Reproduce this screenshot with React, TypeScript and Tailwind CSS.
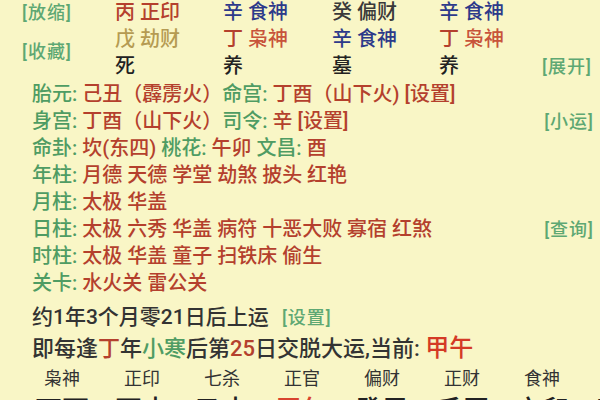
type Tone = "g" | "r";

const tone: Record<Tone, string> = {
  g: "text-[#4f9c63]",
  r: "text-[#b4402d]",
};

type Seg = [string, Tone];

const pillarRows: { parts: Seg[]; action?: string }[] = [
  {
    parts: [
      ["胎元: ", "g"],
      ["己丑（霹雳火）", "r"],
      ["命宫: ", "g"],
      ["丁酉（山下火) [设置]", "r"],
    ],
  },
  {
    parts: [
      ["身宫: ", "g"],
      ["丁酉（山下火）", "r"],
      ["司令: ", "g"],
      ["辛 [设置]", "r"],
    ],
    action: "[小运]",
  },
  {
    parts: [
      ["命卦: ", "g"],
      ["坎(东四) ", "r"],
      ["桃花: ", "g"],
      ["午卯 ", "r"],
      ["文昌: ", "g"],
      ["酉", "r"],
    ],
  },
  { parts: [["年柱: ", "g"], ["月德 天德 学堂 劫煞 披头 红艳", "r"]] },
  { parts: [["月柱: ", "g"], ["太极 华盖", "r"]] },
  {
    parts: [["日柱: ", "g"], ["太极 六秀 华盖 病符 十恶大败 寡宿 红煞", "r"]],
    action: "[查询]",
  },
  { parts: [["时柱: ", "g"], ["太极 华盖 童子 扫铁床 偷生", "r"]] },
  { parts: [["关卡: ", "g"], ["水火关 雷公关", "r"]] },
];

const tenGods = ["枭神", "正印", "七杀", "正官", "偏财", "正财", "食神", "伤官"];
const dayun = ["丁酉", "丙申", "乙未", "甲午", "癸巳", "壬辰", "辛卯", "庚寅"];

export default function App() {
  return (
    <div className="h-[400px] w-[600px] overflow-hidden bg-[#f9f6c6] font-['Roboto','Noto_Sans_CJK_SC',sans-serif] text-[20px] font-medium leading-[27px]">
      {/* hidden stems */}
      <div className="-mt-[1px] grid grid-cols-[115px_108px_109px_107px_103px_1fr] grid-rows-[27px_27px_27px]">
        <div className="pl-[22px] text-[18px] tracking-[1px] text-[#5ea873]">[放缩]</div>
        <div className="text-[#b4402d]">丙 正印</div>
        <div className="text-[#2d3a8a]">辛 食神</div>
        <div className="text-[#3a3a3a]">癸 偏财</div>
        <div className="text-[#2d3a8a]">辛 食神</div>
        <div />

        <div className="row-span-2 pl-[22px] pt-[12px] text-[18px] tracking-[1px] text-[#5ea873]">[收藏]</div>
        <div className="text-[#b59b52]">戊 劫财</div>
        <div>
          <span className="text-[#b4402d]">丁</span> <span className="text-[#c8533a]">枭神</span>
        </div>
        <div className="text-[#2d3a8a]">辛 食神</div>
        <div>
          <span className="text-[#b4402d]">丁</span> <span className="text-[#c8533a]">枭神</span>
        </div>
        <div />

        <div className="text-[#222222]">死</div>
        <div className="text-[#222222]">养</div>
        <div className="text-[#222222]">墓</div>
        <div className="text-[#222222]">养</div>
        <div className="text-[18px] tracking-[1px] text-[#5ea873]">[展开]</div>
      </div>

      {/* shensha rows */}
      <div className="mt-[1px] flex flex-col">
        {pillarRows.map((row, i) => (
          <div key={i} className="flex h-[27px] items-center justify-between pl-[32px] pr-[6px]">
            <div className="whitespace-pre">
              {row.parts.map(([text, t], j) => (
                <span key={j} className={tone[t]}>
                  {text}
                </span>
              ))}
            </div>
            {row.action && (
              <span className="text-[18px] tracking-[1px] text-[#5ea873]">{row.action}</span>
            )}
          </div>
        ))}
      </div>

      {/* dayun */}
      <div className="mt-[5px] pl-[32px] text-[21px] leading-[30px] text-[#333333]">
        约1年3个月零21日后上运{" "}
        <span className="ml-[8px] text-[18px] tracking-[1px] text-[#5ea873]">[设置]</span>
      </div>
      <div className="pl-[32px] text-[22px] leading-[30px] text-[#333333]">
        即每逢<span className="text-[#b4402d]">丁</span>年<span className="text-[#4f9c63]">小寒</span>后第
        <span className="text-[#b4402d]">25</span>日交脱大运,当前:{" "}
        <span className="text-[24px] text-[#d43a26]">甲午</span>
      </div>

      <div className="mt-[4px] grid grid-cols-[repeat(8,80px)] pl-[22px] text-[18px] font-normal leading-[22px] text-[#333333]">
        {tenGods.map((g) => (
          <div key={g} className="text-center">
            {g}
          </div>
        ))}
      </div>
      <div className="mt-[4px] grid grid-cols-[repeat(8,80px)] pl-[22px] text-[27px] leading-[34px]">
        {dayun.map((d, i) => (
          <div key={d} className={i === 3 ? "text-center text-[#d8442e]" : "text-center text-[#222222]"}>
            {d}
          </div>
        ))}
      </div>
    </div>
  );
}
